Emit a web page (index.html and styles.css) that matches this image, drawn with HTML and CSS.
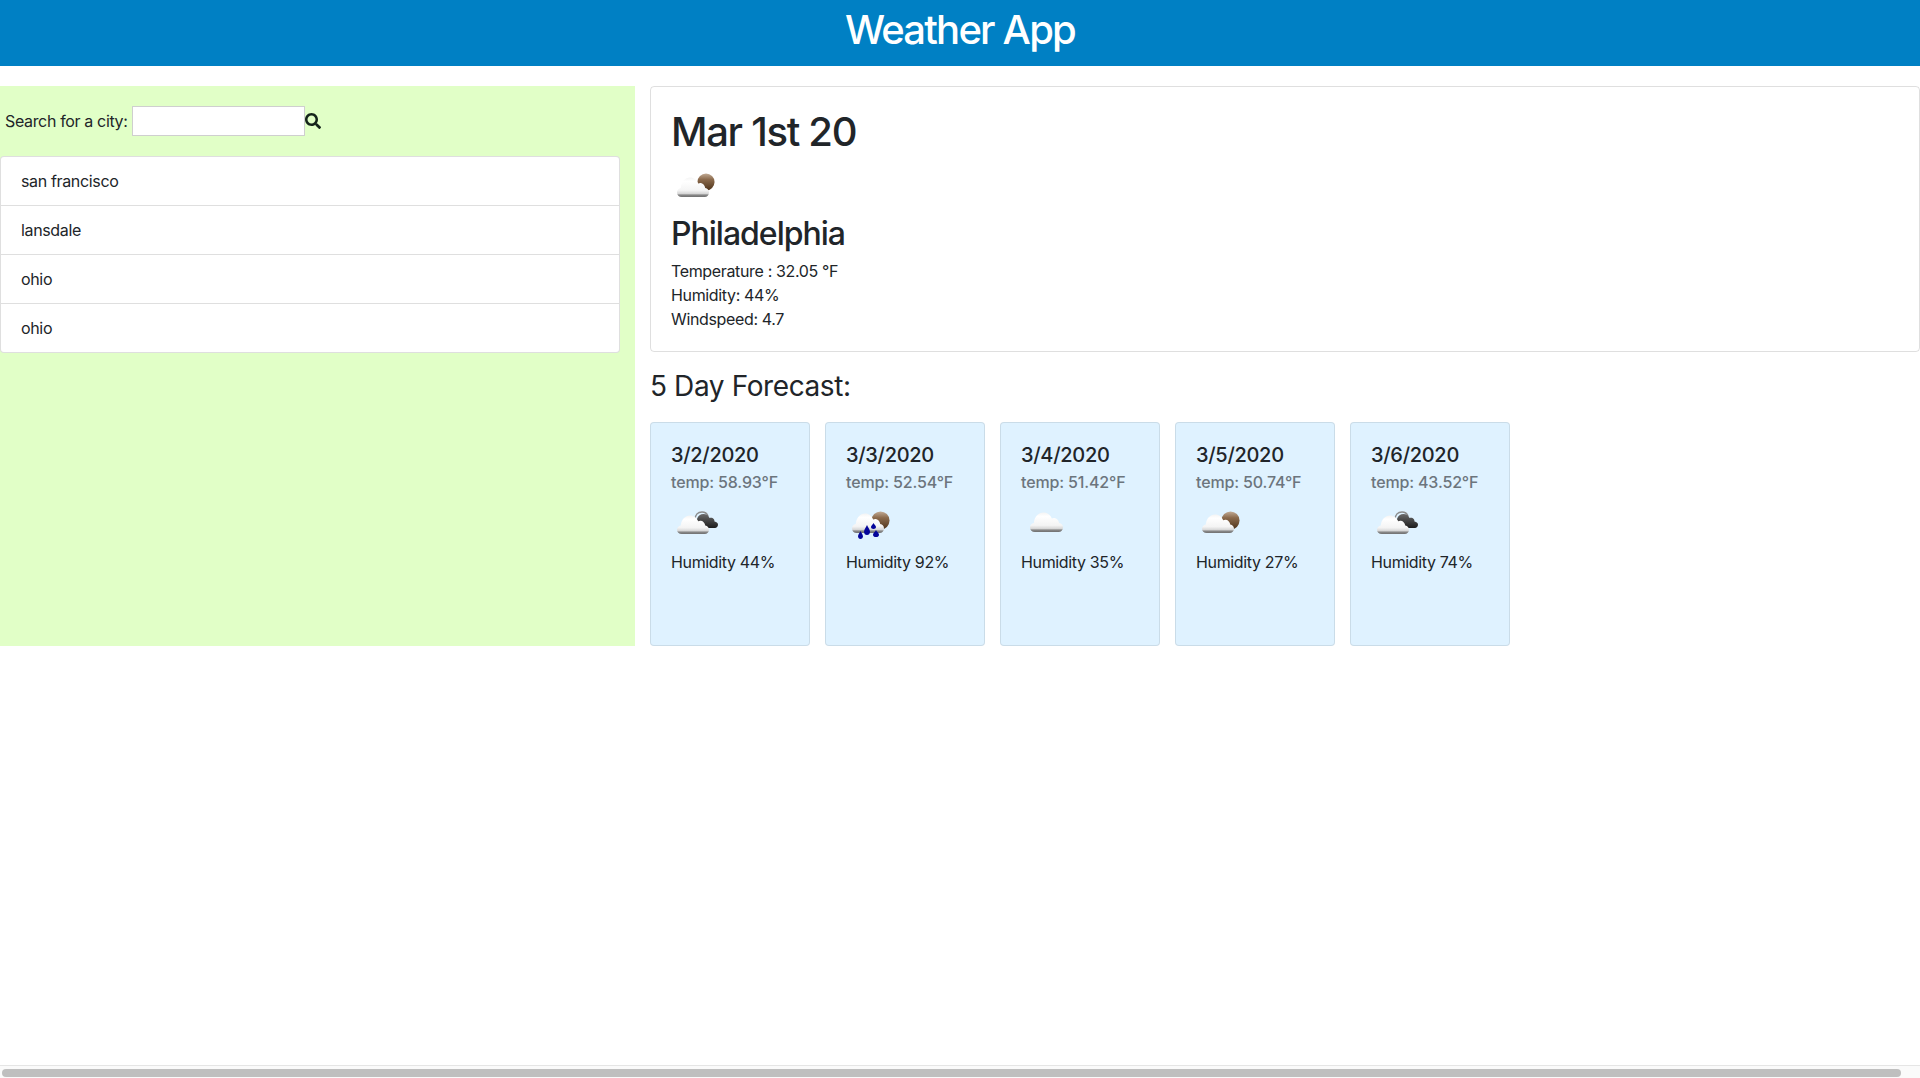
FILE: index.html
```html
<!DOCTYPE html>
<html lang="en">
<head>
<meta charset="utf-8">
<title>Weather App</title>
<link rel="stylesheet" href="styles.css">
</head>
<body>
<svg class="defs" width="0" height="0" aria-hidden="true">
  <defs>
    <linearGradient id="cloudFill" x1="0" y1="0" x2="0" y2="1">
      <stop offset="0" stop-color="#f4f4f4"/>
      <stop offset="0.2" stop-color="#ffffff"/>
      <stop offset="0.66" stop-color="#f4f4f4"/>
      <stop offset="0.82" stop-color="#d8d8d8"/>
      <stop offset="0.9" stop-color="#888888"/>
      <stop offset="1" stop-color="#707070"/>
    </linearGradient>
    <linearGradient id="sunFill" x1="0" y1="0" x2="0" y2="1">
      <stop offset="0" stop-color="#c2ab95"/>
      <stop offset="0.35" stop-color="#8b6a4c"/>
      <stop offset="1" stop-color="#4d3219"/>
    </linearGradient>
    <linearGradient id="darkFill" x1="0" y1="0" x2="0" y2="1">
      <stop offset="0" stop-color="#6a6a6a"/>
      <stop offset="1" stop-color="#1c1c1c"/>
    </linearGradient>
    <symbol id="cloud" viewBox="0 0 34 20" preserveAspectRatio="none">
      <path fill="url(#cloudFill)" d="M5 20C2 20 0 18 0 15.500C0 13 1.800 11.500 4 11C4.500 5 8.500 .500 14 .500C18 .500 21 3 22.500 6.500C23.500 6 24.500 5.800 25.500 6C28 6.500 29.500 8.500 30 11C32.500 11.500 34 13 34 15.500C34 18 32 20 29.500 20Z"/>
    </symbol>
    <symbol id="sun" viewBox="0 0 20 20">
      <circle cx="10" cy="10" r="9.500" fill="url(#sunFill)"/>
    </symbol>
    <symbol id="darkcloud" viewBox="0 0 26 18">
      <path fill="none" stroke="#8c8c8c" stroke-width="1.500" d="M3 9C3 4 6 1 10 1C13 1 15 2.500 16 5"/>
      <path fill="url(#darkFill)" d="M5 17C3 17 1 15.500 1 13C1 10.500 2.500 8.500 5 8C6 4.500 8.500 3 11.500 3C14.500 3 16.500 4.500 17.500 7C18.500 6.500 19.500 6.500 20.500 7C22 7.800 22.500 9 22.500 10.500C24.800 11 26 12 26 13.800C26 15.800 24.500 17 23 17Z"/>
    </symbol>
    <symbol id="drop" viewBox="0 0 10 14" preserveAspectRatio="none">
      <path fill="#04049a" d="M5 0C6 3 10 6 10 9.300C10 12 7.800 14 5 14C2.200 14 0 12 0 9.300C0 6 4 3 5 0Z"/>
    </symbol>
  </defs>
</svg>

<header class="app-header">
  <h1 class="app-title">Weather App</h1>
</header>

<main class="layout">
  <aside class="sidebar">
    <form class="search">
      <label class="search-label" for="city">Search for a city:</label>
      <input class="search-input" id="city" type="text">
      <svg class="search-icon" viewBox="0 0 512 512" aria-hidden="true">
        <path fill="#14241a" d="M505 442.700L405.300 343c-4.500-4.500-10.600-7-17-7H372c27.600-35.300 44-79.700 44-128C416 93.100 322.900 0 208 0S0 93.100 0 208s93.100 208 208 208c48.300 0 92.700-16.400 128-44v16.300c0 6.400 2.500 12.500 7 17l99.700 99.700c9.400 9.400 24.600 9.400 33.900 0l28.300-28.300c9.400-9.400 9.400-24.600.1-34zM208 336c-70.700 0-128-57.200-128-128 0-70.700 57.200-128 128-128 70.700 0 128 57.200 128 128 0 70.700-57.200 128-128 128z"/>
      </svg>
    </form>
    <ul class="city-list">
      <li class="city-item">san francisco</li>
      <li class="city-item">lansdale</li>
      <li class="city-item">ohio</li>
      <li class="city-item">ohio</li>
    </ul>
  </aside>

  <section class="content">
    <div class="current">
      <h2 class="current-date">Mar 1st 20</h2>
      <svg class="wx wx-current" viewBox="0 0 50 50" aria-hidden="true">
        <use href="#sun" x="26" y="4" width="18" height="18"/>
        <use href="#cloud" x="6" y="8" width="32" height="20"/>
      </svg>
      <h3 class="current-city">Philadelphia</h3>
      <p class="current-line">Temperature : 32.05 °F</p>
      <p class="current-line">Humidity: 44%</p>
      <p class="current-line">Windspeed: 4.7</p>
    </div>

    <h4 class="forecast-heading">5 Day Forecast:</h4>

    <div class="forecast">
      <article class="day">
        <h5 class="day-date">3/2/2020</h5>
        <h6 class="day-temp">temp: 58.93°F</h6>
        <svg class="wx" viewBox="0 0 50 50" aria-hidden="true">
          <use href="#darkcloud" x="21" y="4" width="26" height="18"/>
          <use href="#cloud" x="6" y="8" width="32" height="19"/>
        </svg>
        <p class="day-humidity">Humidity 44%</p>
      </article>
      <article class="day">
        <h5 class="day-date">3/3/2020</h5>
        <h6 class="day-temp">temp: 52.54°F</h6>
        <svg class="wx" viewBox="0 0 50 50" aria-hidden="true">
          <use href="#sun" x="25" y="4" width="19" height="19"/>
          <use href="#cloud" x="6" y="6" width="32" height="20"/>
          <use href="#drop" x="18" y="18" width="6" height="10"/>
          <use href="#drop" x="12" y="24" width="5" height="8"/>
          <use href="#drop" x="27" y="23" width="6" height="7"/>
          <use href="#drop" x="25" y="16" width="5" height="6"/>
        </svg>
        <p class="day-humidity">Humidity 92%</p>
      </article>
      <article class="day">
        <h5 class="day-date">3/4/2020</h5>
        <h6 class="day-temp">temp: 51.42°F</h6>
        <svg class="wx" viewBox="0 0 50 50" aria-hidden="true">
          <use href="#cloud" x="9" y="5" width="33" height="20"/>
        </svg>
        <p class="day-humidity">Humidity 35%</p>
      </article>
      <article class="day">
        <h5 class="day-date">3/5/2020</h5>
        <h6 class="day-temp">temp: 50.74°F</h6>
        <svg class="wx" viewBox="0 0 50 50" aria-hidden="true">
          <use href="#sun" x="25" y="4" width="19" height="19"/>
          <use href="#cloud" x="6" y="7" width="32" height="19"/>
        </svg>
        <p class="day-humidity">Humidity 27%</p>
      </article>
      <article class="day">
        <h5 class="day-date">3/6/2020</h5>
        <h6 class="day-temp">temp: 43.52°F</h6>
        <svg class="wx" viewBox="0 0 50 50" aria-hidden="true">
          <use href="#darkcloud" x="21" y="4" width="26" height="18"/>
          <use href="#cloud" x="6" y="8" width="32" height="19"/>
        </svg>
        <p class="day-humidity">Humidity 74%</p>
      </article>
    </div>
  </section>
</main>

<div class="scrollbar" aria-hidden="true"><div class="scrollbar-thumb"></div></div>
</body>
</html>
```

FILE: styles.css
```css
* { box-sizing: border-box; }

html, body { height: 100%; }

html { overflow: hidden; }

body {
  margin: 0;
  display: flex;
  flex-direction: column;
  background: #fff;
  color: #212529;
  font-family: Inter, "Liberation Sans", sans-serif;
  font-size: 16px;
  line-height: 24px;
  letter-spacing: -.35px;
}

.defs { position: absolute; }

.app-header {
  height: 66px;
  flex: none;
  background: #0080c4;
  text-align: center;
}

.app-title {
  margin: 0;
  padding-top: 6px;
  color: #fff;
  font-size: 40px;
  font-weight: 500;
  line-height: 48px;
  letter-spacing: -1.8px;
}

.layout {
  flex: 1;
  display: flex;
  align-items: flex-start;
  gap: 15px;
  padding-top: 20px;
}

.sidebar {
  flex: none;
  width: 635px;
  height: 560px;
  background: #e1ffc7;
}

.search {
  display: flex;
  align-items: center;
  height: 70px;
  padding-left: 5px;
}

.search-label { margin-right: 4px; }

.search-input {
  width: 173px;
  height: 30px;
  padding: 0;
  border: 1px solid #cfcfcf;
  background: #fff;
}

.search-icon {
  width: 16px;
  height: 16px;
  margin-top: -1px;
}

.city-list {
  width: 620px;
  margin: 0;
  padding: 0;
  list-style: none;
  background: #fff;
  border: 1px solid rgba(0, 0, 0, .125);
  border-radius: 4px;
}

.city-item {
  height: 49px;
  padding: 12px 20px;
  border-bottom: 1px solid rgba(0, 0, 0, .125);
}

.city-item:last-child {
  height: 48px;
  border-bottom: 0;
}

.content {
  flex: 1;
  min-width: 0;
}

.current {
  height: 266px;
  padding: 21px 20px 0;
  border: 1px solid rgba(0, 0, 0, .125);
  border-radius: 4px;
}

.current-date {
  margin: 0 0 13px;
  font-size: 40px;
  font-weight: 500;
  line-height: 48px;
  letter-spacing: -1.3px;
}

.wx {
  display: block;
  width: 50px;
  height: 50px;
  margin: 15px 0 -7px;
}

.wx-current {
  margin: 0 0 -4px;
}

.current-city {
  margin: 0 0 6px;
  font-size: 32px;
  font-weight: 500;
  line-height: 38px;
  letter-spacing: -1px;
}

.current-line { margin: 0; }

.forecast-heading {
  margin: 17px 0 19px;
  font-size: 28px;
  font-weight: 400;
  line-height: 34px;
  letter-spacing: -.4px;
}

.forecast {
  display: flex;
  gap: 15px;
}

.day {
  width: 160px;
  height: 224px;
  padding: 20px;
  background: #dff2ff;
  border: 1px solid rgba(0, 0, 0, .09);
  border-radius: 4px;
}

.day-date {
  margin: 0 0 6px;
  font-size: 20px;
  font-weight: 500;
  line-height: 24px;
  letter-spacing: -.3px;
}

.day-temp {
  margin: 0;
  color: #6c757d;
  font-size: 16px;
  font-weight: 500;
  line-height: 19px;
  letter-spacing: -.15px;
}

.day-humidity { margin: 0; }

.scrollbar {
  flex: none;
  height: 13px;
  padding: 3px 19px 1px 2px;
  background: #fafafa;
  border-top: 1px solid #e5e5e5;
}

.scrollbar-thumb {
  height: 8px;
  background: #bfbfbf;
  border-radius: 4px;
}
```
